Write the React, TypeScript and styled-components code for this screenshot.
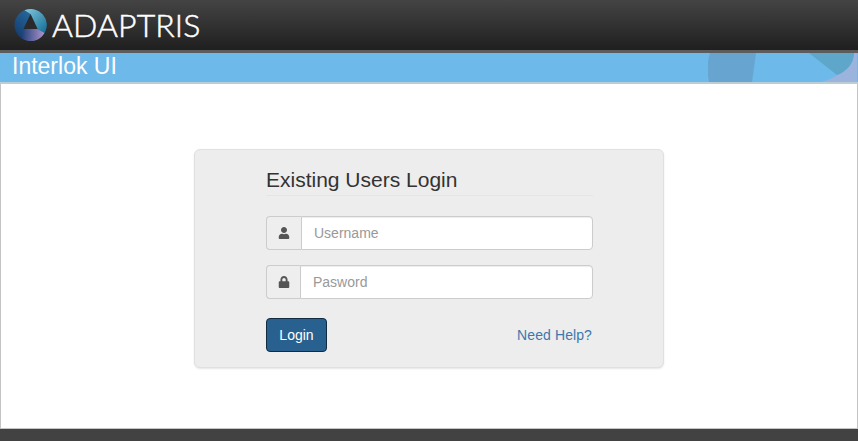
import React from "react";
import styled, { createGlobalStyle } from "styled-components";
import { FaUser, FaLock } from "react-icons/fa";

const GlobalStyle = createGlobalStyle`
  html, body {
    margin: 0;
    padding: 0;
    height: 100%;
    background: #fff;
    font-family: "Liberation Sans", Arial, sans-serif;
    overflow: hidden;
  }
  #root { height: 100%; }
`;

const Page = styled.div`
  display: flex;
  flex-direction: column;
  width: 858px;
  height: 441px;
`;

const Header = styled.header`
  display: flex;
  align-items: center;
  gap: 5px;
  flex-shrink: 0;
  height: 53px;
  padding-left: 14px;
  box-sizing: border-box;
  background: linear-gradient(#444444, #1f1f1f);
  border-bottom: 3px solid #5c5c5c;
`;

const Wordmark = styled.span`
  font-family: Lato, "Open Sans", sans-serif;
  font-weight: 300;
  font-size: 32px;
  line-height: 32px;
  color: #fff;
  letter-spacing: 0.1px;
  -webkit-text-stroke: 0.5px #fff;
`;

const Banner = styled.div`
  position: relative;
  flex-shrink: 0;
  box-sizing: border-box;
  height: 31px;
  background: #6cb9ea;
  border-bottom: 2px solid #bccdd6;
  overflow: hidden;
`;

const BannerTitle = styled.h1`
  margin: 0;
  padding-left: 12px;
  font-size: 23px;
  font-weight: 400;
  line-height: 27px;
  color: #fff;
`;

const BannerArt = styled.svg`
  position: absolute;
  top: 0;
  right: 0;
`;

const Main = styled.main`
  flex: 1;
  box-sizing: border-box;
  padding-top: 65px;
  display: flex;
  justify-content: center;
  align-items: flex-start;
  background: #fff;
  border-left: 1px solid #c4c4c4;
  border-right: 1px solid #c4c4c4;
  border-bottom: 1px solid #c4c4c4;
`;

const Card = styled.form`
  box-sizing: border-box;
  width: 470px;
  height: 219px;
  padding: 16px 70px 0 71px;
  background: #ededed;
  border: 1px solid #e0e0e0;
  border-radius: 6px;
  box-shadow: 0 1px 2px rgba(0, 0, 0, 0.1);
`;

const Legend = styled.h2`
  margin: 0 0 20px;
  height: 29px;
  font-size: 21px;
  font-weight: 400;
  line-height: 27px;
  color: #333;
  border-bottom: 1px solid #e5e5e5;
`;

const Group = styled.div`
  display: flex;
  height: 34px;
  margin-bottom: 15px;
`;

const Addon = styled.span<{ $width: number }>`
  box-sizing: border-box;
  width: ${(p) => p.$width}px;
  display: flex;
  align-items: center;
  justify-content: center;
  flex-shrink: 0;
  font-size: 12px;
  color: #555;
  background: #eee;
  border: 1px solid #ccc;
  border-right: 0;
  border-radius: 4px 0 0 4px;
`;

const Field = styled.input`
  flex: 1;
  min-width: 0;
  box-sizing: border-box;
  padding: 0 12px;
  font-family: "Liberation Sans", Arial, sans-serif;
  font-size: 14px;
  color: #555;
  background: #fff;
  border: 1px solid #ccc;
  border-radius: 0 4px 4px 0;
  box-shadow: inset 0 1px 1px rgba(0, 0, 0, 0.075);
  outline: none;
  &::placeholder {
    color: #999;
    opacity: 1;
  }
`;

const Actions = styled.div`
  display: flex;
  align-items: center;
  justify-content: space-between;
  margin-top: 19px;
`;

const LoginButton = styled.button`
  box-sizing: border-box;
  width: 61px;
  height: 34px;
  padding: 0;
  font-family: "Liberation Sans", Arial, sans-serif;
  font-size: 14px;
  color: #fff;
  background: #286090;
  border: 1px solid #122b40;
  border-radius: 4px;
`;

const HelpLink = styled.a`
  margin-right: 1px;
  font-size: 14px;
  letter-spacing: 0.1px;
  color: #3d78ad;
  text-decoration: none;
`;

const Footer = styled.footer`
  flex-shrink: 0;
  height: 12px;
  background: #424242;
`;

function LogoMark() {
  return (
    <svg width="33" height="32" viewBox="0 0 32 32">
      <defs>
        <linearGradient id="seg-a" x1="0" y1="0" x2="1" y2="1">
          <stop offset="0" stopColor="#86c8dc" />
          <stop offset="1" stopColor="#0f6d96" />
        </linearGradient>
        <linearGradient id="seg-b" x1="0" y1="0" x2="1" y2="0">
          <stop offset="0" stopColor="#1f3f78" />
          <stop offset="1" stopColor="#b094cc" />
        </linearGradient>
        <linearGradient id="seg-c" x1="1" y1="0" x2="0" y2="1">
          <stop offset="0" stopColor="#2f7fb5" />
          <stop offset="1" stopColor="#123466" />
        </linearGradient>
      </defs>
      <circle cx="16" cy="16" r="16" fill="url(#seg-c)" />
      <path d="M10 1.2A16 16 0 0 1 30 24L23 20 16 5Z" fill="url(#seg-a)" />
      <path d="M9 20H23L30 24A16 16 0 0 1 7 29.2Z" fill="url(#seg-b)" />
      <path d="M16 5 23 20H9Z" fill="#2a2a2a" />
    </svg>
  );
}

export default function App() {
  return (
    <Page>
      <GlobalStyle />
      <Header>
        <LogoMark />
        <Wordmark>ADAPTRIS</Wordmark>
      </Header>
      <Banner>
        <BannerTitle>Interlok UI</BannerTitle>
        <BannerArt width="150" height="29" viewBox="708 53 150 29">
          <path d="M710 53H756L752 82H709C707 72 707 62 710 53Z" fill="#67a5d0" />
          <path d="M821 82C836 78 849 70 855 53H857V82Z" fill="#9bb4de" />
          <path d="M809 53H854C854 64 846 72 837 75Z" fill="#5ea7cb" />
        </BannerArt>
      </Banner>
      <Main>
        <Card onSubmit={(e) => e.preventDefault()}>
          <Legend>Existing Users Login</Legend>
          <Group>
            <Addon $width={35}>
              <FaUser />
            </Addon>
            <Field type="text" placeholder="Username" />
          </Group>
          <Group>
            <Addon $width={34}>
              <FaLock />
            </Addon>
            <Field type="password" placeholder="Pasword" />
          </Group>
          <Actions>
            <LoginButton type="submit">Login</LoginButton>
            <HelpLink href="#">Need Help?</HelpLink>
          </Actions>
        </Card>
      </Main>
      <Footer />
    </Page>
  );
}
